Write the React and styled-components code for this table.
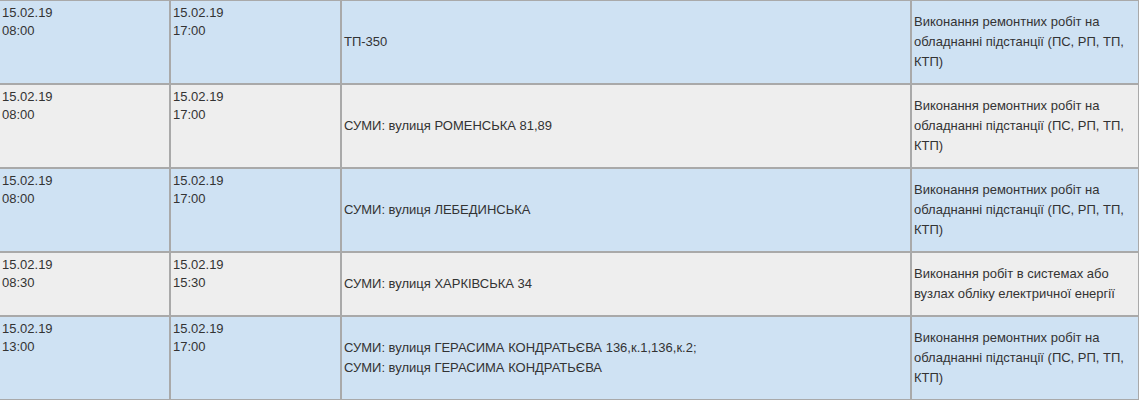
import React from "react";
import styled, { createGlobalStyle } from "styled-components";

const Global = createGlobalStyle`
  html, body { margin: 0; padding: 0; background: #ffffff; }
  body { font-family: "Liberation Sans", Arial, sans-serif; color: #333333; }
`;

const Table = styled.table`
  width: 1139px;
  table-layout: fixed;
  border-collapse: separate;
  border-spacing: 0;
  border-top: 1px solid #a9a9a9;
  font-size: 13px;
`;

const Col = styled.col`
  width: ${(p) => p.$w}px;
`;

const Row = styled.tr`
  background: ${(p) => (p.$alt ? "#eeeeee" : "#cfe2f3")};
`;

const Cell = styled.td`
  border-right: 2px solid #a9a9a9;
  border-bottom: 2px solid #a9a9a9;
  padding: ${(p) => (p.$top ? "3px 2px 0 2px" : "11px 2px 11px 2px")};
  vertical-align: ${(p) => (p.$top ? "top" : "middle")};
  line-height: ${(p) => (p.$top ? "18px" : "20px")};
  color: #333333;
  &:last-child { border-right-width: 1px; }
`;

const rows = [
  { s: ["15.02.19", "08:00"], e: ["15.02.19", "17:00"], addr: ["ТП-350"], work: "Виконання ремонтних робіт на обладнанні підстанції (ПС, РП, ТП, КТП)" },
  { s: ["15.02.19", "08:00"], e: ["15.02.19", "17:00"], addr: ["СУМИ: вулиця РОМЕНСЬКА 81,89"], work: "Виконання ремонтних робіт на обладнанні підстанції (ПС, РП, ТП, КТП)" },
  { s: ["15.02.19", "08:00"], e: ["15.02.19", "17:00"], addr: ["СУМИ: вулиця ЛЕБЕДИНСЬКА"], work: "Виконання ремонтних робіт на обладнанні підстанції (ПС, РП, ТП, КТП)" },
  { s: ["15.02.19", "08:30"], e: ["15.02.19", "15:30"], addr: ["СУМИ: вулиця ХАРКІВСЬКА 34"], work: "Виконання робіт в системах або вузлах обліку електричної енергії" },
  { s: ["15.02.19", "13:00"], e: ["15.02.19", "17:00"], addr: ["СУМИ: вулиця ГЕРАСИМА КОНДРАТЬЄВА 136,к.1,136,к.2;", "СУМИ: вулиця ГЕРАСИМА КОНДРАТЬЄВА"], work: "Виконання ремонтних робіт на обладнанні підстанції (ПС, РП, ТП, КТП)" },
];

const Lines = ({ items }) =>
  items.map((t, i) => (
    <React.Fragment key={i}>
      {i > 0 && <br />}
      {t}
    </React.Fragment>
  ));

export default function App() {
  return (
    <>
      <Global />
      <Table>
        <colgroup>
          <Col $w={171} />
          <Col $w={171} />
          <Col $w={570} />
          <Col $w={227} />
        </colgroup>
        <tbody>
          {rows.map((r, i) => (
            <Row key={i} $alt={i % 2 === 1}>
              <Cell $top><Lines items={r.s} /></Cell>
              <Cell $top><Lines items={r.e} /></Cell>
              <Cell><Lines items={r.addr} /></Cell>
              <Cell>{r.work}</Cell>
            </Row>
          ))}
        </tbody>
      </Table>
    </>
  );
}
